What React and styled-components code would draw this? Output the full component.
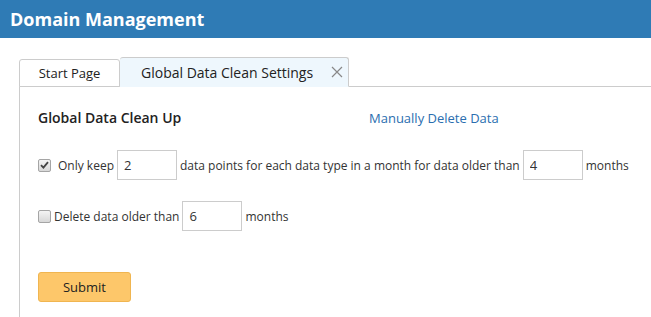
import React from 'react';
import styled, { createGlobalStyle } from 'styled-components';

const GlobalStyle = createGlobalStyle`
  body {
    margin: 0;
    font-family: "Open Sans", "Liberation Sans", sans-serif;
    color: #333;
    background: #fff;
  }
`;

const Header = styled.header`
  height: 38px;
  line-height: 38px;
  background: #2f7bb5;
  color: #fff;
  font-size: 18px;
  font-weight: 700;
  padding-left: 10px;
`;

const Content = styled.div`
  padding: 19px 0 0 19px;
`;

const TabStrip = styled.div`
  display: flex;
  align-items: flex-end;
  height: 29px;
  border-bottom: 1px solid #ccc;
`;

const Tab = styled.div`
  box-sizing: border-box;
  display: flex;
  align-items: center;
  justify-content: ${p => (p.$active ? 'flex-start' : 'center')};
  width: ${p => p.$width}px;
  height: ${p => (p.$active ? 30 : 28)}px;
  margin-bottom: -1px;
  padding-left: ${p => (p.$active ? 21 : 0)}px;
  border: 1px solid #ccc;
  border-left-width: ${p => (p.$active ? 0 : 1)}px;
  border-bottom-color: ${p => (p.$active ? '#eef7fd' : '#ccc')};
  border-radius: 3px 3px 0 0;
  background: ${p => (p.$active ? '#eef7fd' : '#fff')};
  color: #222;
  font-size: ${p => (p.$active ? 14 : 13)}px;
`;

const Close = styled.span`
  margin-left: auto;
  margin-right: 5px;
  display: flex;
  color: #888;
`;

const Panel = styled.div`
  border-left: 1px solid #ccc;
  padding: 21px 0 16px 18px;
  min-height: 200px;
`;

const HeadRow = styled.div`
  display: grid;
  grid-template-columns: 331px auto;
  align-items: center;
  margin-bottom: 23px;
`;

const Heading = styled.div`
  font-size: 14px;
  font-weight: 600;
  color: #222;
`;

const Link = styled.a`
  font-size: 13px;
  color: #2a6eaf;
  text-decoration: none;
  cursor: pointer;
`;

const Row = styled.div`
  display: flex;
  align-items: center;
  gap: 3px;
  font-size: 12px;
  color: #333;
  margin-bottom: ${p => p.$mb}px;
`;

const Check = styled.span`
  box-sizing: border-box;
  width: 13px;
  height: 13px;
  border: 1px solid #a5a5a5;
  border-radius: 2px;
  background: linear-gradient(#f4f4f4, #d8d8d8);
  display: flex;
  align-items: center;
  justify-content: center;
  margin-right: ${p => p.$gap}px;
`;

const NumInput = styled.input`
  box-sizing: border-box;
  width: 60px;
  height: 30px;
  border: 1px solid #ccc;
  padding: 0 6px;
  font-family: inherit;
  font-size: 13px;
  color: #333;
  outline: none;
`;

const Submit = styled.button`
  box-sizing: border-box;
  width: 93px;
  height: 30px;
  background: #fdc76a;
  border: 1px solid #f0b550;
  border-radius: 3px;
  font-family: inherit;
  font-size: 13px;
  color: #222;
  cursor: pointer;
`;

const Tick = () => (
  <svg width="9" height="8" viewBox="0 0 9 8">
    <path d="M1 4.2 L3.4 6.6 L8 1.2" fill="none" stroke="#444" strokeWidth="1.8" />
  </svg>
);

export default function App() {
  return (
    <>
      <GlobalStyle />
      <Header>Domain Management</Header>
      <Content>
        <TabStrip>
          <Tab $width={101}>Start Page</Tab>
          <Tab $active $width={229}>
            Global Data Clean Settings
            <Close>
              <svg width="12" height="12" viewBox="0 0 12 12">
                <path d="M1 1 L11 11 M11 1 L1 11" stroke="#888" strokeWidth="1.2" />
              </svg>
            </Close>
          </Tab>
        </TabStrip>
        <Panel>
          <HeadRow>
            <Heading>Global Data Clean Up</Heading>
            <Link>Manually Delete Data</Link>
          </HeadRow>
          <Row $mb={21}>
            <Check $gap={4}><Tick /></Check>
            <span>Only keep</span>
            <NumInput defaultValue="2" />
            <span>data points for each data type in a month for data older than</span>
            <NumInput defaultValue="4" />
            <span>months</span>
          </Row>
          <Row $mb={41}>
            <Check $gap={0} />
            <span>Delete data older than</span>
            <NumInput defaultValue="6" />
            <span>months</span>
          </Row>
          <Submit>Submit</Submit>
        </Panel>
      </Content>
    </>
  );
}
